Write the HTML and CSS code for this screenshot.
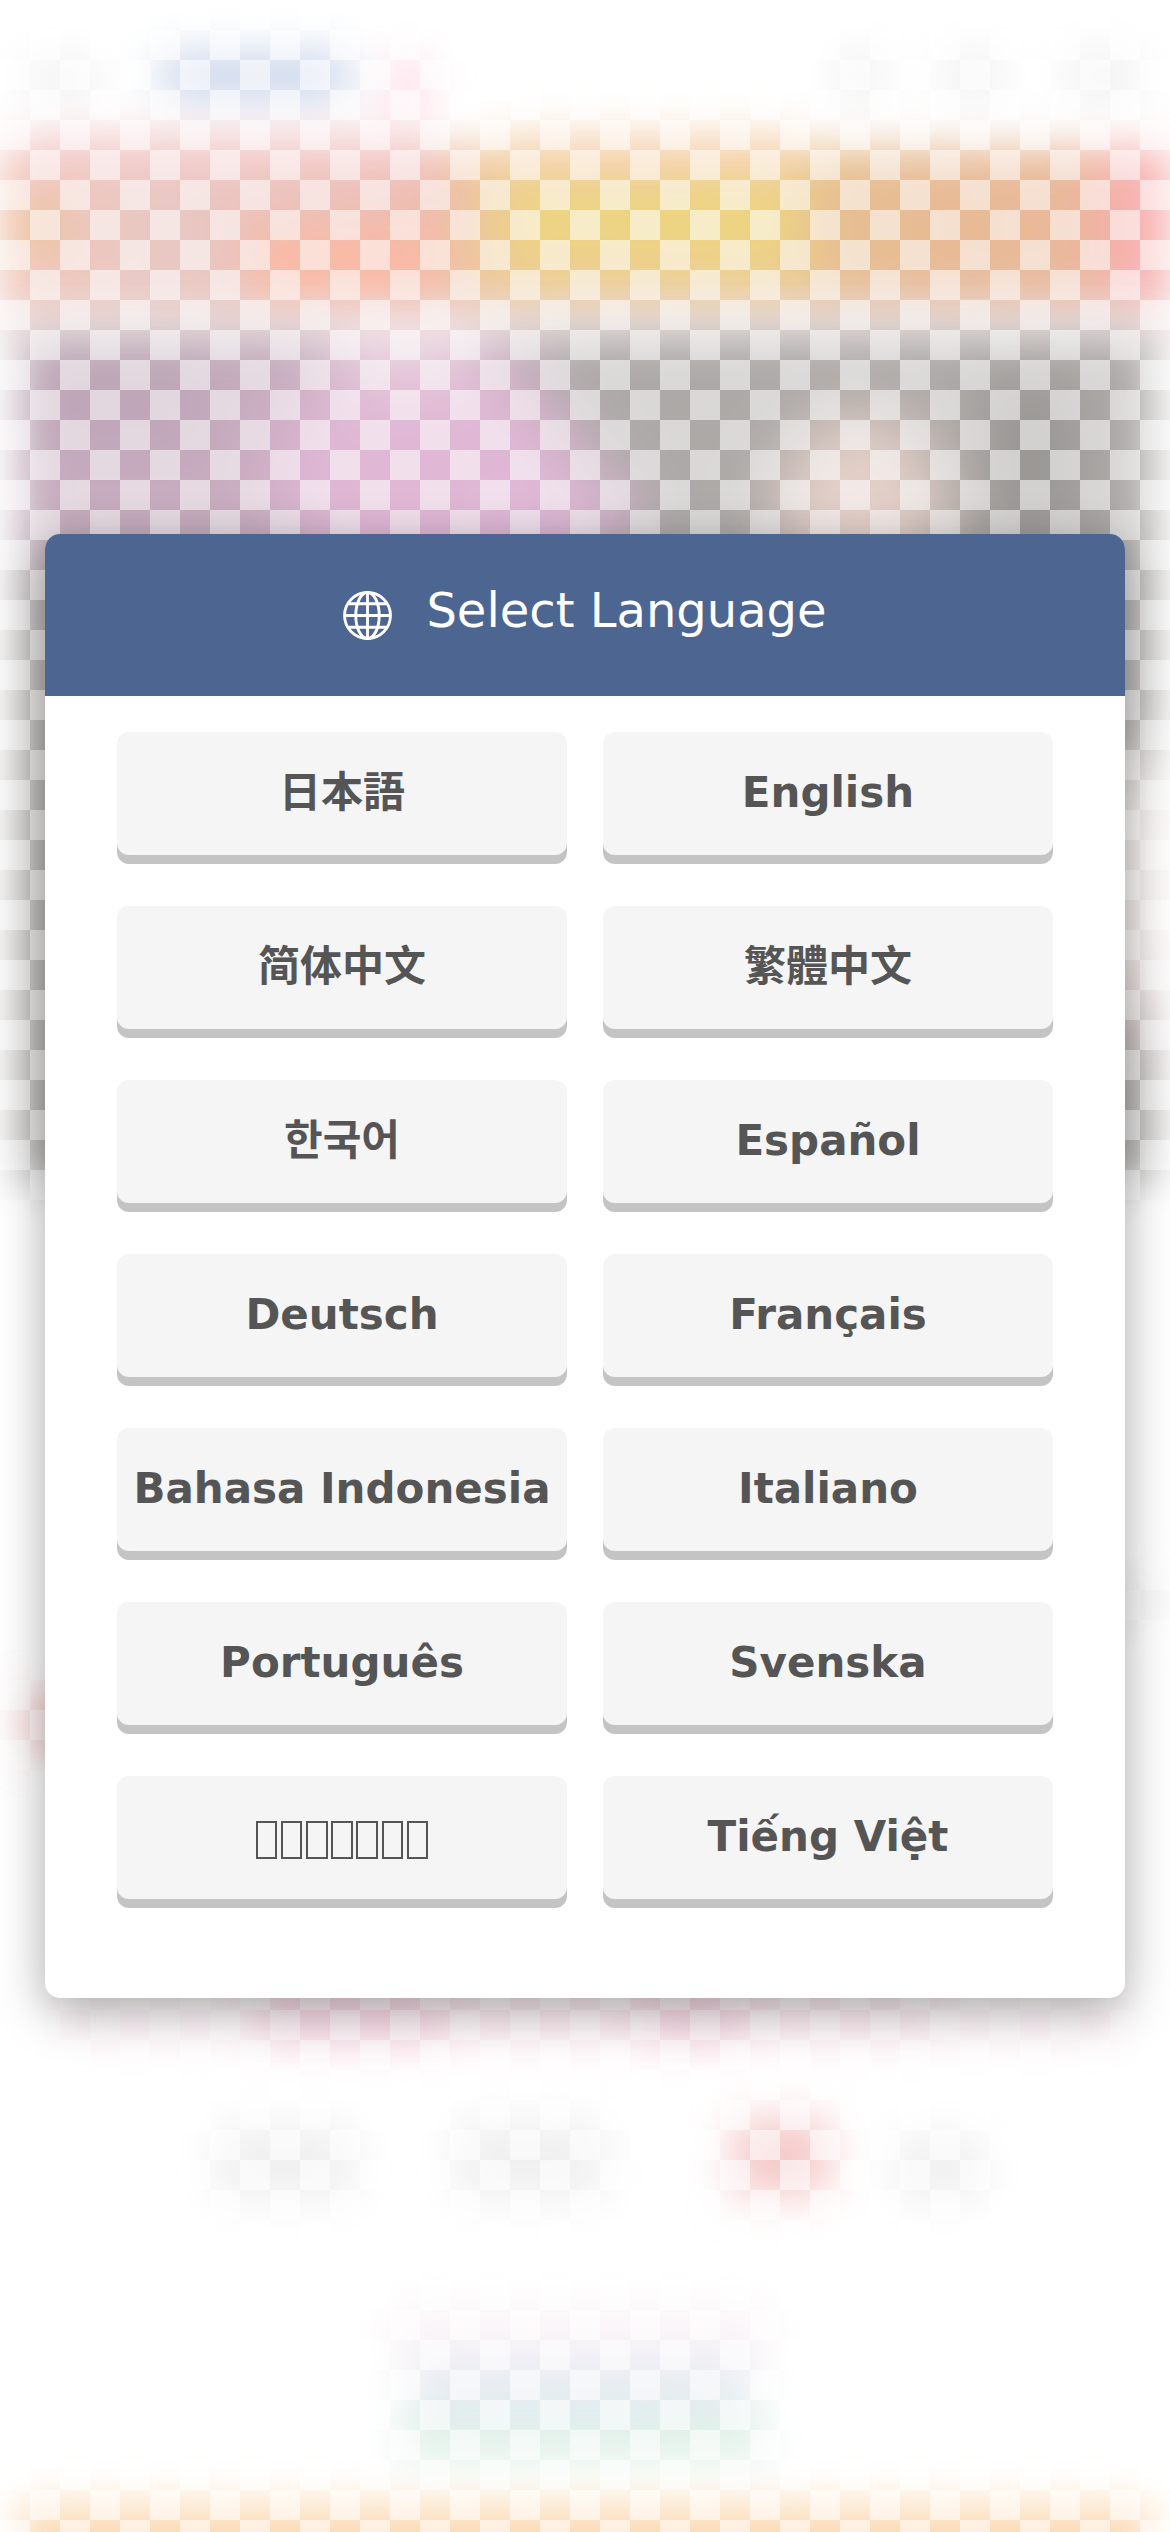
FILE: index.html
```html
<!DOCTYPE html>
<html lang="en">
<head>
<meta charset="utf-8">
<title>Select Language</title>
<link rel="stylesheet" href="styles.css">
</head>
<body>
<div class="backdrop" aria-hidden="true">
  <svg class="scene" viewBox="0 0 1170 2532">
    <defs>
      <filter id="soft" filterUnits="userSpaceOnUse" x="-100" y="-100" width="1370" height="2732"><feGaussianBlur stdDeviation="22"/></filter>
      <filter id="wide" filterUnits="userSpaceOnUse" x="-100" y="-100" width="1370" height="2732"><feGaussianBlur stdDeviation="26"/></filter>
      <linearGradient id="banner">
        <stop offset="0" stop-color="#f3c6b8"/><stop offset=".13" stop-color="#e8c8c4"/>
        <stop offset=".37" stop-color="#eebcb1"/><stop offset=".43" stop-color="#edcd8f"/>
        <stop offset=".66" stop-color="#ecd08b"/><stop offset=".72" stop-color="#e6be92"/>
        <stop offset=".92" stop-color="#e9b89a"/><stop offset=".96" stop-color="#f8b0b0"/>
      </linearGradient>
      <clipPath id="photo"><rect x="20" y="334" width="1132" height="846"/></clipPath>
    </defs>
    <g filter="url(#soft)">
      <rect x="160" y="52" width="190" height="48" fill="#ccd7eb"/>
      <rect x="385" y="60" width="45" height="50" fill="#fddbe6"/>
      <g fill="#f2f2f2">
        <rect x="25" y="58" width="75" height="42"/><rect x="835" y="50" width="50" height="54"/>
        <rect x="942" y="50" width="60" height="54"/><rect x="1065" y="50" width="75" height="54"/>
      </g>
      <rect y="148" width="1170" height="162" fill="url(#banner)"/>
      <rect x="250" y="230" width="190" height="66" fill="#fab9a3"/>
      <rect x="15" y="206" width="50" height="42" fill="#e9c494"/>
      <rect x="20" y="134" width="410" height="38" fill="#f4cccc"/>
      <rect x="500" y="134" width="300" height="36" fill="#f8d4b6"/>
      <rect x="510" y="190" width="280" height="56" fill="#edd581"/>
      <rect y="300" width="1170" height="34" fill="#ecd8d4"/>
    </g>
    <g filter="url(#soft)">
      <g clip-path="url(#photo)">
        <rect y="328" width="1170" height="852" fill="#aca9a7"/>
        <g filter="url(#wide)">
          <rect x="10" y="340" width="520" height="225" fill="#c8acbf"/>
          <ellipse cx="430" cy="480" rx="155" ry="125" fill="#e0b7d5"/>
          <rect x="330" y="300" width="150" height="80" fill="#e8d2dd"/>
          <ellipse cx="545" cy="515" rx="90" ry="55" fill="#dfb8d6"/>
          <rect x="30" y="360" width="180" height="90" fill="#bea5b7"/>
          <ellipse cx="860" cy="510" rx="85" ry="100" fill="#e4d0c9"/>
          <rect x="985" y="380" width="90" height="170" fill="#979492"/>
          <rect x="1090" y="760" width="100" height="250" fill="#f2ece9"/>
          <rect x="1090" y="990" width="60" height="55" fill="#d7bfc2"/>
        </g>
      </g>
    </g>
    <g filter="url(#soft)">
      <rect x="25" y="1698" width="100" height="50" fill="#f3c0c0"/>
      <rect x="1090" y="1580" width="70" height="40" fill="#f1f1f1"/>
      <rect x="60" y="1988" width="1060" height="56" fill="#fdf3f7"/>
      <rect x="260" y="1980" width="180" height="66" fill="#f7d6e3"/>
      <rect x="440" y="1980" width="210" height="62" fill="#fbe8ef"/>
      <rect x="645" y="1980" width="95" height="66" fill="#f7d6e3"/>
      <rect x="740" y="1980" width="190" height="62" fill="#fbe8ef"/>
      <g fill="#f0f0f0">
        <rect x="215" y="2125" width="140" height="75"/><rect x="455" y="2120" width="150" height="80"/>
        <rect x="895" y="2135" width="90" height="65"/>
      </g>
      <rect x="732" y="2118" width="98" height="78" fill="#f5c9c9"/>
      <rect x="390" y="2305" width="380" height="65" fill="#fbf5f8"/>
      <rect x="410" y="2355" width="340" height="58" fill="#e8ecf3"/>
      <rect x="400" y="2410" width="365" height="50" fill="#dff1e7"/>
      <rect x="430" y="2400" width="230" height="22" fill="#e2ebf0"/>
      <rect x="20" y="2504" width="1130" height="80" fill="#fcdab4"/>
    </g>
  </svg>
</div>
<main class="dialog">
  <header class="dialog-header">
    <svg class="globe" viewBox="0 0 48 48" fill="none" stroke="#fff" stroke-width="2.8" aria-hidden="true">
      <circle cx="24" cy="24" r="22.5"/><ellipse cx="24" cy="24" rx="11.5" ry="22.5"/>
      <path d="M24 1.500v45M1.500 24h45M5.300 12.500h37.400M5.300 35.500h37.400"/>
    </svg>
    <h1 class="title">Select Language</h1>
  </header>
  <div class="languages">
    <button class="language cjk" lang="ja">日本語</button>
    <button class="language">English</button>
    <button class="language cjk hans" lang="zh-Hans">简体中文</button>
    <button class="language cjk hant" lang="zh-Hant">繁體中文</button>
    <button class="language cjk kr" lang="ko">한국어</button>
    <button class="language" lang="es">Español</button>
    <button class="language" lang="de">Deutsch</button>
    <button class="language" lang="fr">Français</button>
    <button class="language" lang="id">Bahasa Indonesia</button>
    <button class="language" lang="it">Italiano</button>
    <button class="language" lang="pt">Português</button>
    <button class="language" lang="sv">Svenska</button>
    <button class="language boxes"><i></i><i></i><i></i><i></i><i></i><i></i><i></i></button>
    <button class="language" lang="vi">Tiếng Việt</button>
  </div>
</main>
</body>
</html>
```
FILE: styles.css
```css
* { box-sizing: border-box; }

body {
  margin: 0;
  height: 2532px;
  display: flex;
  align-items: center;
  justify-content: center;
  overflow: hidden;
  background: #fff;
  font-family: "DejaVu Sans", "Noto Sans CJK JP", sans-serif;
}

.backdrop { position: absolute; inset: 0; overflow: hidden; }

.backdrop::after {
  content: "";
  position: absolute;
  inset: 0;
  background: repeating-conic-gradient(transparent 0 25%, rgba(255, 255, 255, .55) 0 50%) 0 0 / 60px 60px;
}

.scene { display: block; width: 1170px; height: 2532px; }

.dialog {
  position: relative;
  width: 1080px;
  height: 1464px;
  border-radius: 15px;
  background: #fff;
  box-shadow: 0 12px 48px rgba(0, 0, 0, .34);
}

.dialog-header {
  height: 162px;
  display: flex;
  align-items: center;
  justify-content: center;
  gap: 34px;
  border-radius: 15px 15px 0 0;
  background: #4d6591;
  color: #fff;
}

.globe { width: 49px; height: 49px; }

.title {
  margin: 0;
  padding-bottom: 10px;
  font-size: 48px;
  font-weight: 400;
  line-height: 60px;
}

.languages {
  display: grid;
  grid-template-columns: 450px 450px;
  gap: 51px 36px;
  padding: 36px 72px 0;
}

.language {
  height: 123px;
  padding: 0 0 2px;
  border: 0;
  border-radius: 12px;
  background: #f5f5f5;
  box-shadow: 0 9px #c4c4c4;
  color: #555;
  font: bold 42px "DejaVu Sans", "Noto Sans CJK JP", sans-serif;
  white-space: nowrap;
}

.cjk { padding-bottom: 10px; }
.hans { font-family: "DejaVu Sans", "Noto Sans CJK SC", sans-serif; }
.hant { font-family: "DejaVu Sans", "Noto Sans CJK TC", sans-serif; }
.kr { font-family: "DejaVu Sans", "Noto Sans CJK KR", sans-serif; }

.boxes {
  display: flex;
  align-items: center;
  justify-content: center;
  gap: 3.7px;
  padding: 4px 0 0;
}

.boxes i { width: 21.5px; height: 38px; border: 2px solid #555; }
```
